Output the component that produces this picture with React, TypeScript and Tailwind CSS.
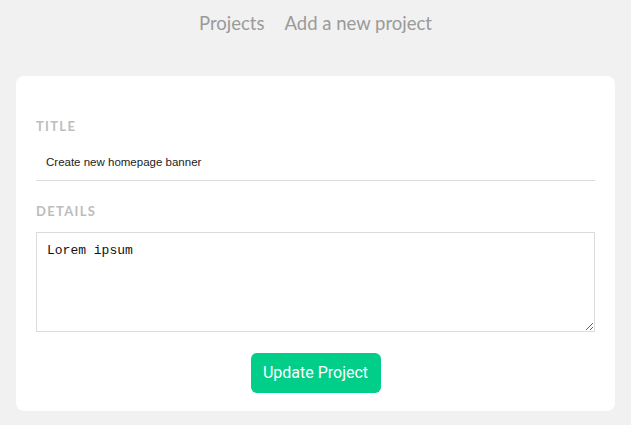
import React, { useState } from "react";

const App = () => {
  const [title, setTitle] = useState("Create new homepage banner");
  const [details, setDetails] = useState("Lorem ipsum");

  return (
    <div className="min-h-[425px] bg-[#f1f1f1] px-4 pb-[14px] font-['Lato',sans-serif]">
      <nav className="flex h-[44px] items-center justify-center gap-[20px] pt-[3px] text-[18.5px] text-[#9a9a9a]">
        <a href="#">Projects</a>
        <a href="#">Add a new project</a>
      </nav>

      <form
        onSubmit={(e) => e.preventDefault()}
        className="mt-[32px] rounded-[8px] bg-white px-5 pb-[18px] pt-[42px]"
      >
        <label className="block text-[13px] font-bold leading-4 tracking-[0.1em] text-[#bdbdbd]">
          TITLE
        </label>
        <input
          type="text"
          value={title}
          onChange={(e) => setTitle(e.target.value)}
          className="mt-[10px] block h-[37px] w-full border-b border-[#dcdcdc] px-[10px] font-['Liberation_Sans',sans-serif] text-[11.5px] text-[#222] outline-none"
        />

        <label className="mt-[22px] block text-[13px] font-bold leading-4 tracking-[0.1em] text-[#bdbdbd]">
          DETAILS
        </label>
        <textarea
          value={details}
          onChange={(e) => setDetails(e.target.value)}
          className="mt-[13px] block h-[100px] w-full border border-[#dcdcdc] px-[10px] py-[8px] font-['Liberation_Mono',monospace] text-[13px] text-[#111] outline-none"
        />

        <div className="mt-[21px] flex justify-center">
          <button
            type="submit"
            className="h-[40px] w-[130px] rounded-[6px] bg-[#00ce89] font-['Roboto',sans-serif] text-[16px] text-white"
          >
            Update Project
          </button>
        </div>
      </form>
    </div>
  );
};

export default App;
